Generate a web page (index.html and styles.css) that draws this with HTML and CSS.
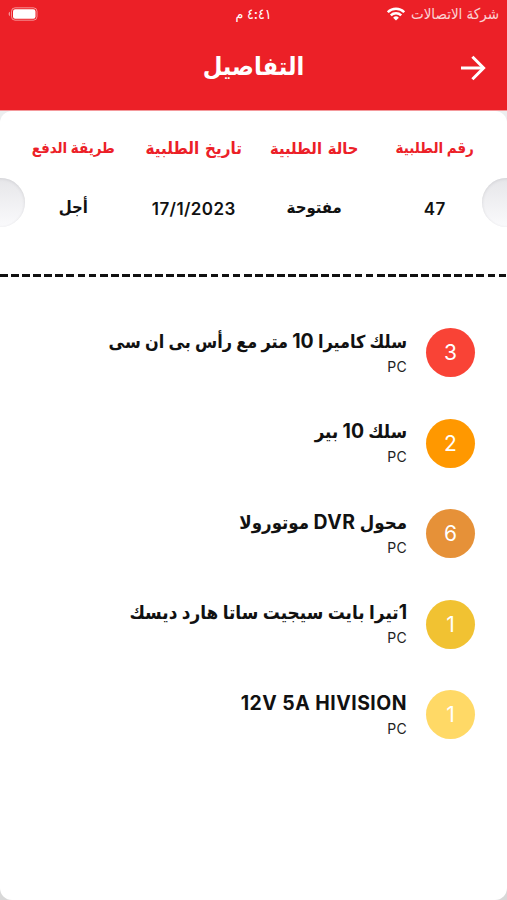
FILE: index.html
```html
<!DOCTYPE html>
<html lang="ar" dir="rtl">
<head>
    <meta charset="UTF-8">
    <meta name="viewport" content="width=device-width, initial-scale=1.0">
    <title>التفاصيل</title>
    <link rel="stylesheet" href="styles.css">
</head>
<body>
    <header class="header">
        <div class="status-bar">
            <div class="carrier">
                <span class="carrier-name">شركة الاتصالات</span>
                <svg class="wifi" viewBox="0 0 18 14" width="18" height="14" fill="none" stroke="#fff" stroke-width="2.5">
                    <path d="M0.8 5.2a11.6 11.6 0 0 1 16.4 0"/>
                    <path d="M3.8 8.4a7.4 7.4 0 0 1 10.4 0"/>
                    <path d="M9 13.6L6.1 10.7a4.1 4.1 0 0 1 5.8 0z" fill="#fff" stroke="none"/>
                </svg>
            </div>
            <div class="clock">٤:٤١ م</div>
            <div class="battery-wrap">
                <svg class="battery" viewBox="0 0 30 14" width="30" height="14">
                    <rect x="3.5" y="0.8" width="25.5" height="12.4" rx="3.6" fill="none" stroke="#fff" stroke-opacity="0.5"/>
                    <rect x="5" y="2.3" width="22.5" height="9.4" rx="2.2" fill="#fff"/>
                    <path d="M2 4.8v4.4a2.4 2.4 0 0 1 0-4.4z" fill="#fff" fill-opacity="0.5"/>
                </svg>
            </div>
        </div>
        <div class="nav-bar">
            <h1 class="title">التفاصيل</h1>
            <svg class="back" viewBox="0 0 26 26" width="26" height="26" fill="none" stroke="#fff" stroke-width="3">
                <path d="M1 13h22"/>
                <path d="M12.4 1.8L23.6 13 12.4 24.2"/>
            </svg>
        </div>
    </header>

    <main class="ticket">
        <section class="order-info">
            <div class="info">
                <div class="info-label">رقم الطلبية</div>
                <div class="info-value">47</div>
            </div>
            <div class="info">
                <div class="info-label label-status">حالة الطلبية</div>
                <div class="info-value value-text">مفتوحة</div>
            </div>
            <div class="info">
                <div class="info-label label-date">تاريخ الطلبية</div>
                <div class="info-value">17/1/2023</div>
            </div>
            <div class="info">
                <div class="info-label">طريقة الدفع</div>
                <div class="info-value value-text">أجل</div>
            </div>
        </section>

        <div class="divider"></div>

        <ul class="items">
            <li class="item">
                <span class="qty qty-red">3</span>
                <div class="item-text">
                    <div class="item-name name-camera">سلك كاميرا <b>10</b> متر مع رأس بى ان سى</div>
                    <div class="item-unit">PC</div>
                </div>
            </li>
            <li class="item">
                <span class="qty qty-orange">2</span>
                <div class="item-text">
                    <div class="item-name">سلك <b>10</b> بير</div>
                    <div class="item-unit">PC</div>
                </div>
            </li>
            <li class="item">
                <span class="qty qty-amber">6</span>
                <div class="item-text">
                    <div class="item-name">محول <b>DVR</b> موتورولا</div>
                    <div class="item-unit">PC</div>
                </div>
            </li>
            <li class="item">
                <span class="qty qty-gold">1</span>
                <div class="item-text">
                    <div class="item-name name-disk"><b>1</b>تيرا بايت سيجيت ساتا هارد ديسك</div>
                    <div class="item-unit">PC</div>
                </div>
            </li>
            <li class="item">
                <span class="qty qty-yellow">1</span>
                <div class="item-text">
                    <div class="item-name"><b dir="ltr">12V 5A HIVISION</b></div>
                    <div class="item-unit">PC</div>
                </div>
            </li>
        </ul>

        <span class="notch notch-left"></span>
        <span class="notch notch-right"></span>
    </main>
</body>
</html>
```
FILE: styles.css
```css
* {
    margin: 0;
    padding: 0;
    box-sizing: border-box;
}

body {
    font-family: Inter, "DejaVu Sans Condensed", "DejaVu Sans", sans-serif;
    background: linear-gradient(#eceeef 50%, #d8d8d8 50%);
    color: #111;
    height: 900px;
    display: flex;
    flex-direction: column;
    overflow: hidden;
}

/* header */
.header {
    height: 111px;
    background: #ec2027;
    color: #fff;
    border-bottom: 1px solid #f4999c;
}

.status-bar {
    height: 27px;
    padding: 0 8px;
    display: grid;
    grid-template-columns: 1fr auto 1fr;
    align-items: center;
}

.carrier {
    display: flex;
    align-items: center;
    gap: 6px;
    white-space: nowrap;
}

.carrier-name {
    font-size: 15px;
    line-height: 26px;
    opacity: 0.8;
}

.clock {
    font-size: 14px;
    font-weight: 500;
    line-height: 26px;
}

.battery-wrap {
    display: flex;
    justify-content: flex-end;
}

.nav-bar {
    height: 83px;
    display: grid;
    grid-template-columns: 1fr auto 1fr;
    align-items: center;
    padding: 0 21px;
}

.title {
    grid-column: 2;
    grid-row: 1;
    font-size: 25.2px;
    line-height: 40px;
    margin-bottom: 6px;
}

.back {
    grid-column: 1;
    grid-row: 1;
    margin-bottom: 1px;
}

/* ticket */
.ticket {
    position: relative;
    flex: 1;
    background: #fff;
    border-radius: 12px;
    overflow: hidden;
}

.order-info {
    height: 163px;
    padding: 23px 12px 0 13px;
    display: grid;
    grid-template-columns: repeat(4, 1fr);
    text-align: center;
}

.info-label {
    height: 28px;
    line-height: 28px;
    margin-bottom: 33px;
    font-size: 15px;
    font-weight: 700;
    color: #ec2027;
    white-space: nowrap;
}

.label-status {
    font-size: 16.4px;
    word-spacing: 2px;
}

.label-date {
    font-size: 16.9px;
    word-spacing: 2px;
}

.info-value {
    height: 28px;
    line-height: 28px;
    font-size: 17px;
    font-weight: 600;
    letter-spacing: 0.4px;
}

.value-text {
    font-size: 16.6px;
    line-height: 24px;
    letter-spacing: 0;
}

.divider {
    height: 3px;
    background: repeating-linear-gradient(90deg, #111 0, #111 7.8px, transparent 7.8px, transparent 11.08px);
}

.items {
    list-style: none;
    padding: 51px 32px 0;
}

.item {
    display: flex;
    align-items: center;
    gap: 19px;
    height: 49px;
    margin-bottom: 41.5px;
}

.qty {
    flex: none;
    width: 49px;
    height: 49px;
    border-radius: 50%;
    color: #fff;
    font-size: 21px;
    line-height: 50px;
    text-align: center;
}

.qty-red { background: #f94336; }
.qty-orange { background: #ff9800; }
.qty-amber { background: #e69138; }
.qty-gold { background: #f1c232; }
.qty-yellow { background: #ffd966; }

.item-name {
    height: 28px;
    line-height: 26px;
    font-size: 18.5px;
    font-weight: 700;
    white-space: nowrap;
}

.name-camera { font-size: 17.9px; }
.name-disk { font-size: 18.8px; }

.item-name b {
    font-size: 19.4px;
    font-weight: 700;
    letter-spacing: 0.5px;
}

.item-unit {
    height: 22px;
    line-height: 22px;
    font-size: 14px;
    letter-spacing: 0.3px;
    color: #222;
}

/* side cut-outs */
.notch {
    position: absolute;
    top: 67px;
    width: 49px;
    height: 49px;
    border-radius: 50%;
    background: linear-gradient(#e6e6e9, #fafafc);
    box-shadow: inset 0 1px 3px #d2d2d6;
}

.notch-left { left: -24px; }
.notch-right { right: -24px; }
```
